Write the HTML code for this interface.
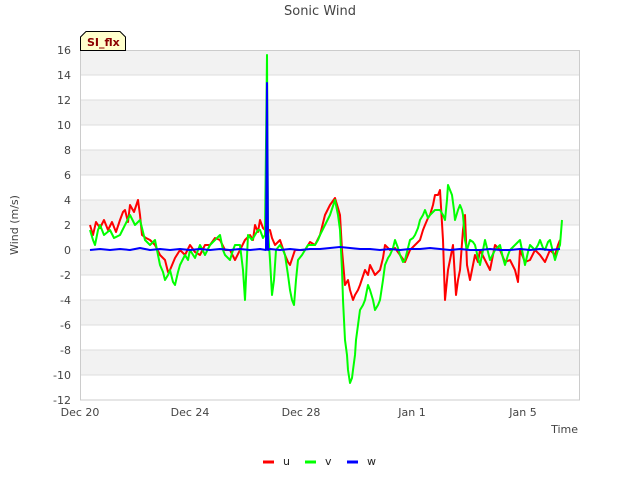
<!DOCTYPE html>
<html><head><meta charset="utf-8"><style>
body{margin:0;background:#fff;width:640px;height:480px;overflow:hidden;font-family:"DejaVu Sans","Liberation Sans",sans-serif}
</style></head><body>
<svg width="640" height="480" viewBox="0 0 640 480" xmlns="http://www.w3.org/2000/svg" font-family="DejaVu Sans, Liberation Sans, sans-serif">
<text x="320" y="15" text-anchor="middle" font-size="13" fill="#444">Sonic Wind</text>
<rect x="80" y="50" width="500" height="350" fill="#fff"/>
<g fill="#f2f2f2">
<rect x="80" y="50" width="500" height="25"/><rect x="80" y="100" width="500" height="25"/><rect x="80" y="150" width="500" height="25"/><rect x="80" y="200" width="500" height="25"/><rect x="80" y="250" width="500" height="25"/><rect x="80" y="300" width="500" height="25"/><rect x="80" y="350" width="500" height="25"/>
</g>
<g stroke="#ddd" stroke-width="1">
<line x1="80" y1="75" x2="580" y2="75"/><line x1="80" y1="100" x2="580" y2="100"/><line x1="80" y1="125" x2="580" y2="125"/><line x1="80" y1="150" x2="580" y2="150"/><line x1="80" y1="175" x2="580" y2="175"/><line x1="80" y1="200" x2="580" y2="200"/><line x1="80" y1="225" x2="580" y2="225"/><line x1="80" y1="250" x2="580" y2="250"/><line x1="80" y1="275" x2="580" y2="275"/><line x1="80" y1="300" x2="580" y2="300"/><line x1="80" y1="325" x2="580" y2="325"/><line x1="80" y1="350" x2="580" y2="350"/><line x1="80" y1="375" x2="580" y2="375"/>
</g>
<rect x="80.5" y="50.5" width="499" height="349.5" fill="none" stroke="#ccc"/>
<g font-size="11" fill="#444" text-anchor="end">
<text x="71" y="54">16</text><text x="71" y="79">14</text><text x="71" y="104">12</text><text x="71" y="129">10</text><text x="71" y="154">8</text><text x="71" y="179">6</text><text x="71" y="204">4</text><text x="71" y="229">2</text><text x="71" y="254">0</text><text x="71" y="279">-2</text><text x="71" y="304">-4</text><text x="71" y="329">-6</text><text x="71" y="354">-8</text><text x="71" y="379">-10</text><text x="71" y="404">-12</text>
</g>
<g font-size="11" fill="#444" text-anchor="middle">
<text x="80" y="416">Dec 20</text><text x="190" y="416">Dec 24</text><text x="301" y="416">Dec 28</text><text x="412" y="416">Jan 1</text><text x="523" y="416">Jan 5</text>
</g>
<text x="578" y="433" font-size="11" fill="#444" text-anchor="end">Time</text>
<text transform="translate(18,225) rotate(-90)" font-size="11" fill="#444" text-anchor="middle">Wind (m/s)</text>
<g fill="none" stroke-width="2" stroke-linejoin="round">
<polyline stroke="#f00" points="90,225 93,235 96,222 100,228 104,220 108,230 112,222 116,232 120,220 123,212 125,210 128,222 130,205 134,212 138,200 140,215 142,235 146,238 150,240 155,245 160,255 165,260 168,272 170,270 175,258 180,250 185,255 190,245 195,252 200,255 205,245 210,245 215,238 220,240 225,250 230,250 235,260 240,250 245,240 250,235 253,240 255,225 258,232 260,220 263,228 265,230 270,230 272,238 275,245 280,240 285,255 288,262 290,265 295,250 300,250 305,250 310,242 315,245 320,235 325,215 330,205 335,198 338,208 340,215 342,250 345,285 348,280 350,290 353,300 355,295 358,290 360,285 365,270 368,275 370,265 375,275 380,270 383,258 385,245 390,250 395,248 400,255 405,262 410,250 415,245 420,240 423,230 425,225 428,218 430,215 433,205 435,195 438,195 440,190 443,240 445,300 448,270 450,260 453,245 456,295 458,280 460,270 463,230 465,215 467,265 470,280 472,270 475,255 478,262 480,250 485,260 490,270 493,255 495,245 500,250 505,262 510,260 515,270 518,282 520,250 525,262 530,260 535,250 540,255 545,262 550,250 555,255 558,245 560,240"/>
<polyline stroke="#0f0" points="90,230 93,240 95,245 98,230 100,225 104,235 110,230 114,238 120,235 125,225 130,215 135,225 140,220 143,232 145,240 150,245 155,240 158,255 160,265 163,272 165,280 168,275 170,270 173,282 175,285 178,272 180,265 185,255 188,260 190,250 195,258 200,245 205,255 210,245 215,240 220,235 223,250 225,255 230,260 233,250 235,245 240,245 243,270 245,300 248,235 252,240 255,235 258,230 260,230 263,238 265,235 267,55 268,230 270,260 272,295 274,280 276,250 280,245 283,250 285,255 288,275 290,290 292,300 294,305 296,280 298,260 302,255 305,250 308,245 310,245 315,245 318,240 320,235 325,225 330,215 335,200 338,215 340,230 342,270 343,300 345,340 347,355 348,370 350,383 352,378 353,370 355,355 356,340 358,325 360,310 363,305 365,300 368,285 370,290 373,300 375,310 378,305 380,300 383,280 385,265 388,258 390,255 393,248 395,240 398,248 400,255 403,262 405,260 408,248 410,240 413,238 415,235 418,228 420,220 423,215 425,210 428,218 430,215 435,210 440,210 443,215 445,220 447,200 448,185 450,190 452,195 454,210 455,220 458,210 460,205 462,210 463,215 465,240 467,250 470,240 473,242 475,245 478,258 480,265 483,250 485,240 488,252 490,260 495,250 500,245 503,258 505,265 508,255 510,250 515,245 520,240 523,255 525,265 528,252 530,245 535,250 538,245 540,240 543,248 545,250 548,242 550,240 553,252 555,260 558,250 560,245 562,220"/>
<polyline stroke="#00f" points="90,250 100,249 110,250 120,249 130,250 140,248 150,250 160,249 170,250 180,249 190,250 200,249 210,250 220,249 230,250 240,249 250,250 260,249 266,250 267,83 268,250 270,249 280,250 290,249 300,250 310,249 320,249 330,248 340,247 350,248 360,249 370,249 380,250 390,249 400,250 410,249 420,249 430,248 440,249 450,250 460,249 470,250 480,250 490,249 500,250 510,250 520,249 530,250 540,249 550,250 560,249"/>
</g>
<path d="M80.5,50.5 L80.5,37 L86,31.5 L120,31.5 L125.5,37 L125.5,50.5 Z" fill="#ffffcc" stroke="#000"/>
<text x="87" y="46" font-size="11" font-weight="bold" fill="#8b0000">SI_flx</text>
<g stroke-width="3">
<line x1="263" y1="462" x2="274" y2="462" stroke="#f00"/>
<line x1="305" y1="462" x2="316" y2="462" stroke="#0f0"/>
<line x1="347" y1="462" x2="358" y2="462" stroke="#00f"/>
</g>
<g font-size="11" fill="#222">
<text x="283" y="465">u</text><text x="325" y="465">v</text><text x="367" y="465">w</text>
</g>
</svg>
</body></html>
